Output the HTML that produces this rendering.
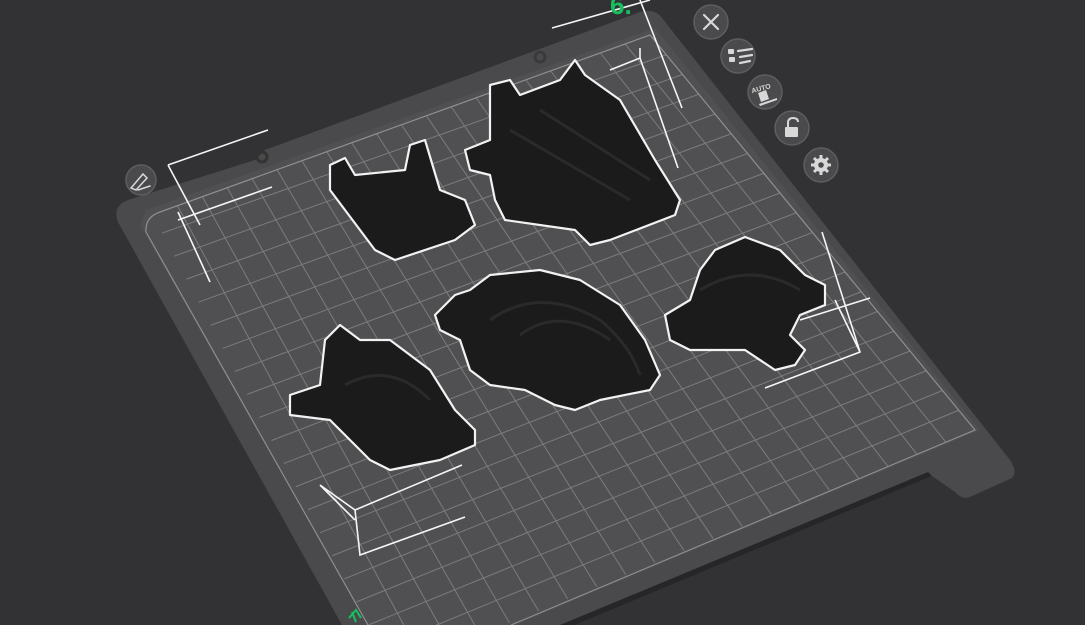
<!DOCTYPE html>
<html><head><meta charset="utf-8"><style>
html,body{margin:0;padding:0;background:#333335;overflow:hidden;width:1085px;height:625px}
svg{display:block}
</style></head><body>
<svg id="s" width="1085" height="625" viewBox="0 0 1085 625" xmlns="http://www.w3.org/2000/svg">
<rect width="1085" height="625" fill="#323234"/>
<defs>
<clipPath id="gc"><path d="M160,212 Q145,217 146,232 L368,625 L511,625 L975,430 L650,35 Z"/></clipPath>
</defs>
<path d="M128,200 L255,160 L265,150 L640,12 Q655,8 662,18 L1010,460 Q1018,472 1012,478 L970,497 Q962,500 955,492 L932,476 L575,625 L342,625 L118,222 Q112,206 128,200 Z" fill="#4a4a4c"/>
<path d="M932,476 L575,625 L560,625 L928,472 Z" fill="#262628"/>
<path d="M146,210 L655,28 L980,430 L515,625 L368,625 L140,225 Z" fill="#505052"/>
<g id="grid" clip-path="url(#gc)" stroke="#7c7c7e" stroke-width="1" fill="none"></g>
<path d="M160,212 Q145,217 146,232 L368,625 M511,625 L975,430 L650,35 L160,212" stroke="#8e8e90" stroke-width="1.2" fill="none"/>
<circle cx="262" cy="157" r="5" fill="none" stroke="#333" stroke-width="3"/>
<circle cx="540" cy="57" r="5" fill="none" stroke="#3a3a3a" stroke-width="3"/>
<g fill="#1b1b1c" stroke="#f2f2f2" stroke-width="2.2" stroke-linejoin="round">
<path d="M330,165 L345,158 L355,175 L405,170 L410,145 L425,140 L440,190 L465,200 L475,225 L455,240 L395,260 L375,250 L330,190 Z"/>
<path d="M465,150 L490,140 L490,85 L510,80 L520,95 L560,80 L575,60 L585,75 L620,100 L655,160 L680,200 L675,215 L610,240 L590,245 L575,230 L505,220 L495,200 L490,175 L470,170 Z"/>
<path d="M435,315 L455,295 L470,290 L490,275 L540,270 L580,280 L620,305 L645,340 L660,375 L650,390 L600,400 L575,410 L555,405 L525,390 L490,385 L470,370 L460,340 L440,330 Z"/>
<path d="M290,395 L320,385 L325,340 L340,325 L360,340 L390,340 L430,370 L455,410 L475,430 L475,445 L440,460 L390,470 L370,460 L330,420 L290,415 Z"/>
<path d="M665,315 L690,300 L700,270 L715,250 L745,237 L780,250 L805,275 L825,285 L825,305 L800,315 L790,335 L805,350 L795,365 L775,370 L745,350 L690,350 L670,340 Z"/>
</g>
<g fill="none" stroke="#2e2e30" stroke-width="3" opacity="0.8">
<path d="M490,320 Q540,285 600,320 Q630,345 640,375"/>
<path d="M520,335 Q560,305 610,340"/>
<path d="M345,385 Q390,360 430,400"/>
<path d="M700,290 Q750,260 800,290"/>
<path d="M510,130 L630,200 M540,110 L650,180"/>
</g>
<g stroke="#f5f5f5" stroke-width="1.6" fill="none">
<path d="M168,165 L268,130 M168,165 L200,225 M178,220 L272,187 M178,212 L210,282"/>
<path d="M552,28 L650,0 M640,0 L682,108 M610,70 L640,58 L678,168 M640,58 L640,48"/>
<path d="M320,485 L355,510 L360,555 L465,517 M355,510 L462,465 M320,485 L355,520"/>
<path d="M765,388 L860,352 L822,232 M800,320 L870,298 M860,352 L835,300"/>
</g>
<text x="610" y="14" font-family="Liberation Sans,sans-serif" font-size="26" font-weight="bold" fill="#16c060">6.</text>
<path d="M352,612 L356,622 M349,618 L356,610 L361,618" stroke="#16c060" stroke-width="2" fill="none"/>
<g fill="#4a4a4c" stroke="#5e5e60" stroke-width="1.5">
<circle cx="711" cy="22" r="17"/><circle cx="738" cy="56" r="17"/><circle cx="765" cy="92" r="17"/><circle cx="792" cy="128" r="17"/><circle cx="821" cy="165" r="17"/><circle cx="141" cy="180" r="15"/>
</g>
<g stroke="#d8d8d8" stroke-width="2.2" fill="none" stroke-linecap="round">
<path d="M704,15 L718,29 M718,15 L704,29"/>
<path d="M738,51 L752,49 M740,57 L752,55 M740,63 L750,61"/>
<path d="M131,188 L143,174 L147,178 L136,190 Z M138,190 L150,186" stroke-width="1.5"/>
</g>
<g fill="#d8d8d8">
<rect x="728" y="49" width="6" height="5" rx="1"/><rect x="729" y="57" width="6" height="5" rx="1"/>
<text x="751" y="91" font-family="Liberation Sans,sans-serif" font-size="7" font-weight="bold" transform="rotate(-15 760 88)">AUTO</text>
<path d="M758,93 L766,90 L769,99 L761,102 Z"/><path d="M759,104 L777,98 L777,100 L760,106 Z"/>
<rect x="785" y="127" width="13" height="10" rx="1"/>
<path d="M788,127 L788,123 Q788,118 793,118 Q798,118 798,122" stroke="#d8d8d8" stroke-width="2" fill="none"/>
<circle cx="821" cy="165" r="7"/>
</g>
<g stroke="#d8d8d8" stroke-width="3">
<path d="M821,155 L821,175 M811,165 L831,165 M814,158 L828,172 M828,158 L814,172"/>
</g>
<circle cx="821" cy="165" r="2.8" fill="#4a4a4c"/>
</svg>
<script>
var TL=[150,210],TR=[650,35],BR=[975,430],BL=[393,671],N=20;
function L(a,b,t){return [a[0]+(b[0]-a[0])*t,a[1]+(b[1]-a[1])*t];}
var g=document.getElementById('grid'),h='';
for(var i=1;i<N;i++){var t=i/N;
var a=L(TL,TR,t),b=L(BL,BR,t);h+='<line x1="'+a[0]+'" y1="'+a[1]+'" x2="'+b[0]+'" y2="'+b[1]+'"/>';
a=L(TL,BL,t);b=L(TR,BR,t);h+='<line x1="'+a[0]+'" y1="'+a[1]+'" x2="'+b[0]+'" y2="'+b[1]+'"/>';}
g.innerHTML=h;
</script>
</body></html>
